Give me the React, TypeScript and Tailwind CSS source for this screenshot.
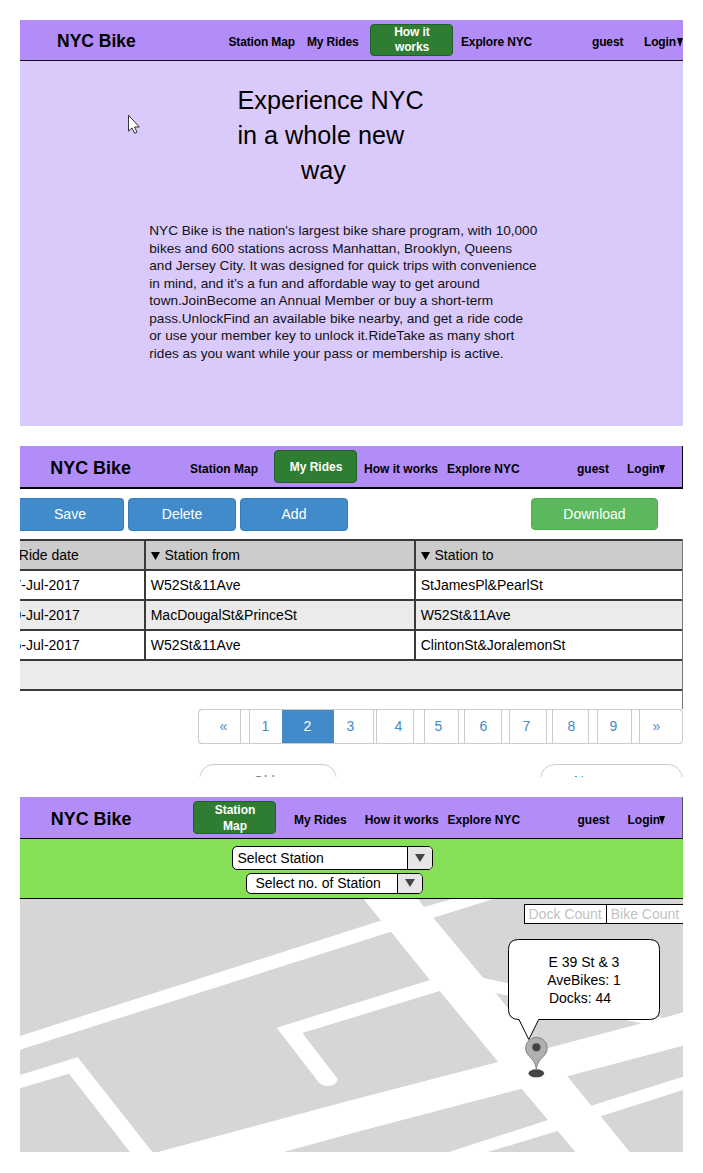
import React from "react";

type NavItem = { label: string; width: string; active?: boolean };

function Tri({ className, fill = "#000" }: { className: string; fill?: string }) {
  return (
    <svg className={`block shrink-0 ${className}`} viewBox="0 0 10 10" preserveAspectRatio="none">
      <path d="M0 0H10L5 10Z" fill={fill} />
    </svg>
  );
}

function Header({
  frame,
  title,
  items,
  nav,
  button,
  caret,
}: {
  frame: string;
  title: string;
  items: NavItem[];
  nav: string;
  button: string;
  caret: string;
}) {
  return (
    <header className={`flex shrink-0 items-start overflow-hidden bg-[#b28df7] font-bold whitespace-nowrap text-black ${frame}`}>
      <h1 className={`shrink-0 leading-[20px] ${title}`}>NYC Bike</h1>
      {items.map((item) =>
        item.active ? (
          <div key={item.label} className={`flex shrink-0 items-start pt-[4px] ${item.width}`}>
            <button
              className={`flex w-[83px] justify-center rounded-[4px] border border-[#1f5f28] bg-[#2f7d32] text-center text-[12px] whitespace-pre-line text-white ${button}`}
            >
              {item.label}
            </button>
          </div>
        ) : (
          <a key={item.label} className={`flex shrink-0 leading-[16px] ${nav} ${item.width}`}>
            {item.label}
            {item.label === "Login" && <Tri className={`h-[9px] w-[6px] ${caret}`} />}
          </a>
        ),
      )}
    </header>
  );
}

function HowItWorks() {
  return (
    <section className="flex h-[406px] flex-col overflow-hidden bg-[#dacafc]">
      <Header
        frame="h-[41px] border-b border-[#111]"
        title="mt-[11px] ml-[37px] w-[171.5px] text-[17.5px]"
        nav="pt-[14px] text-[12px] tracking-[-0.15px]"
        button="h-[32px] pl-[1px] leading-[15px] tracking-[-0.1px]"
        caret="mt-[4px] ml-[1px]"
        items={[
          { label: "Station Map", width: "w-[78.5px]" },
          { label: "My Rides", width: "w-[63px]" },
          { label: "How it\nworks", width: "w-[91px]", active: true },
          { label: "Explore NYC", width: "w-[131px]" },
          { label: "guest", width: "w-[52px]" },
          { label: "Login", width: "w-[40px]" },
        ]}
      />
      <div className="flex flex-1">
        <svg className="mt-[53px] ml-[107px] h-[21px] w-[14px] shrink-0" viewBox="0 0 14 21">
          <path d="M1.5 1.2V17.2L5 14L7.6 19.3L10 18.2L7.6 13H12.3Z" fill="#fff" stroke="#333" strokeWidth="1" />
        </svg>
        <div className="ml-[8.3px] flex flex-col">
          <h2 className="mt-[22px] ml-[88.2px] flex flex-col text-[25.2px] leading-[35px] whitespace-nowrap">
            <span>Experience NYC</span>
            <span>in a whole new</span>
            <span className="ml-[63.5px]">way</span>
          </h2>
          <p className="mt-[34px] flex flex-col text-[13.6px] leading-[17.5px] whitespace-nowrap text-[#111]">
            <span>NYC Bike is the nation's largest bike share program, with 10,000</span>
            <span>bikes and 600 stations across Manhattan, Brooklyn, Queens</span>
            <span>and Jersey City. It was designed for quick trips with convenience</span>
            <span>in mind, and it’s a fun and affordable way to get around</span>
            <span>town.JoinBecome an Annual Member or buy a short-term</span>
            <span>pass.UnlockFind an available bike nearby, and get a ride code</span>
            <span>or use your member key to unlock it.RideTake as many short</span>
            <span>rides as you want while your pass or membership is active.</span>
          </p>
        </div>
      </div>
    </section>
  );
}

const rides = [
  ["17-Jul-2017", "W52St&11Ave", "StJamesPl&PearlSt"],
  ["19-Jul-2017", "MacDougalSt&PrinceSt", "W52St&11Ave"],
  ["16-Jul-2017", "W52St&11Ave", "ClintonSt&JoralemonSt"],
];

const pages = [
  { label: "«", cell: "w-[43px] pl-[20.5px] rounded-l-[4px] border-x mr-[8px]" },
  { label: "1", cell: "w-[33px] pl-[11.5px] border-l" },
  { label: "2", cell: "w-[52px] pl-[21.5px] bg-[#428bca] border-[#428bca] text-white" },
  { label: "3", cell: "w-[40px] pl-[12.5px] border-r mr-[2px]" },
  { label: "4", cell: "w-[38px] pl-[17.5px] border-x mr-[10px]" },
  { label: "5", cell: "w-[35px] pl-[9.5px] border-x mr-[5px]" },
  { label: "6", cell: "w-[38px] pl-[14.5px] border-x mr-[7px]" },
  { label: "7", cell: "w-[38px] pl-[12.5px] border-x mr-[5px]" },
  { label: "8", cell: "w-[37px] pl-[14.5px] border-x mr-[8px]" },
  { label: "9", cell: "w-[35px] pl-[11.5px] border-x mr-[7px]" },
  { label: "»", cell: "w-[44px] pl-[12.5px] border-x rounded-r-[4px]" },
];

function MyRides() {
  return (
    <section className="mt-[20px] flex h-[331px] flex-col overflow-hidden bg-white">
      <Header
        frame="h-[43px] border-b-2 border-r border-black"
        title="mt-[12px] ml-[30.3px] w-[139.7px] text-[17.9px]"
        nav="pt-[15px] text-[12px]"
        button="h-[33px] pl-[1px] leading-[32px]"
        caret="mt-[4px] -ml-px"
        items={[
          { label: "Station Map", width: "w-[84px]" },
          { label: "My Rides", width: "w-[90px]", active: true },
          { label: "How it works", width: "w-[83px]" },
          { label: "Explore NYC", width: "w-[130px]" },
          { label: "guest", width: "w-[50px]" },
          { label: "Login", width: "w-[50px]" },
        ]}
      />
      <div className="flex h-[50px] shrink-0 items-start pt-[9px] text-center text-[14px] leading-[31px] text-white">
        <button className="h-[33px] w-[104px] rounded-r-[4px] border border-l-0 border-[#357ebd] bg-[#428bca] pr-[3px]">Save</button>
        <button className="ml-[4px] h-[33px] w-[108px] rounded-[4px] border border-[#357ebd] bg-[#428bca]">Delete</button>
        <button className="ml-[4px] h-[33px] w-[108px] rounded-[4px] border border-[#357ebd] bg-[#428bca]">Add</button>
        <button className="ml-[183px] h-[32px] w-[127px] rounded-[4px] border border-[#4cae4c] bg-[#5cb85c]">Download</button>
      </div>
      <div className="flex h-[170px] shrink-0 flex-col border-r border-[#777] text-[14px] leading-[16px] whitespace-nowrap">
        <div className="flex h-[32px] shrink-0 border-y-2 border-[#3a3a3a] bg-[#ccc]">
          <div className="flex w-[126px] justify-end overflow-hidden border-r-2 border-[#3a3a3a] pt-[6px] pr-[65.3px]">
            <span className="shrink-0">Ride date</span>
          </div>
          <div className="flex w-[270px] border-r-2 border-[#3a3a3a] pt-[6px] pl-[4.5px]">
            <Tri className="mt-[5px] mr-[5px] h-[8px] w-[9px]" />
            Station from
          </div>
          <div className="flex pt-[6px] pl-[4.5px]">
            <Tri className="mt-[5px] mr-[5px] h-[8px] w-[9px]" />
            Station to
          </div>
        </div>
        {rides.map(([date, from, to], i) => (
          <div key={date} className={`flex h-[30px] shrink-0 border-b-2 border-[#3a3a3a] ${i === 1 ? "bg-[#ebebeb]" : "bg-white"}`}>
            <div className="flex w-[126px] justify-end overflow-hidden border-r-2 border-[#3a3a3a] pt-[6px] pr-[64.3px]">
              <span className="shrink-0">{date}</span>
            </div>
            <div className="w-[270px] border-r-2 border-[#3a3a3a] pt-[6px] pl-[4.7px]">{from}</div>
            <div className="pt-[6px] pl-[4.7px]">{to}</div>
          </div>
        ))}
        <div className="h-[30px] shrink-0 border-b-2 border-[#3a3a3a] bg-[#ebebeb]" />
      </div>
      <nav className="ml-[178px] flex h-[35px] w-[485px] shrink-0 rounded-[4px] border-y border-[#ccc] text-[14px] text-[#428bca]">
        {pages.map((p) => (
          <a key={p.label} className={`-my-px shrink-0 border-y border-[#ccc] pt-[7px] leading-[18px] ${p.cell}`}>
            {p.label}
          </a>
        ))}
      </nav>
      <div className="mt-[20px] ml-[179px] flex shrink-0 justify-between text-[14px] leading-[16px]">
        <a className="h-[30px] w-[138px] rounded-[15px] border border-[#ccc] pt-[8px] pl-[27px] text-[#777]">
          ←<span className="ml-[12px]">Older</span>
        </a>
        <a className="h-[30px] w-[143px] rounded-[15px] border border-[#ccc] pt-[8px] pl-[32.7px] text-[#428bca]">Newer →</a>
      </div>
    </section>
  );
}

const blocks = [
  "20,899 363.5,899 381,920.5 20,1036",
  "418.3,899 452,899 424,907",
  "493.3,899 683,899 683,1012.3 663,1018 483,977.7 433.3,917.7",
  "495.7,993 641.7,1023.3 547,1048.3 541,1049",
  "20,1088.3 69,1073.7 130,1152 20,1152",
  "283.7,1152 350,1133.7 521.7,1088.7 548,1120 449,1152",
  "487.7,1152 557.7,1131 575.3,1152",
  "567.3,1076.3 683,1045.7 683,1076.7 591.3,1105.7",
  "600.7,1116.3 683,1090 683,1152 629.7,1152",
];

function StationMap() {
  return (
    <section className="mt-[20px] flex h-[355px] flex-col overflow-hidden">
      <Header
        frame="h-[42px] border-b border-r border-b-black border-r-[#555]"
        title="mt-[12px] ml-[30.8px] w-[142.2px] text-[17.9px]"
        nav="pt-[15px] text-[12px]"
        button="h-[33px] pl-[1px] leading-[16px]"
        caret="mt-[4px] -ml-px"
        items={[
          { label: "Station\nMap", width: "w-[101px]", active: true },
          { label: "My Rides", width: "w-[70.7px]" },
          { label: "How it works", width: "w-[82.8px]" },
          { label: "Explore NYC", width: "w-[130px]" },
          { label: "guest", width: "w-[50px]" },
          { label: "Login", width: "w-[50px]" },
        ]}
      />
      <div className="flex h-[60px] shrink-0 flex-col items-start border-b border-black bg-[#87df57] pt-[7px] text-[14px] leading-[16px] whitespace-nowrap">
        <button className="ml-[212px] flex h-[24px] w-[201px] overflow-hidden rounded-[5px] border border-black bg-white text-left">
          <span className="h-full w-[174px] shrink-0 pt-[3px] pl-[4.5px]">Select Station</span>
          <span className="flex h-full w-[25px] shrink-0 border-l border-black bg-[#e6e6e6]">
            <Tri className="mt-[7px] ml-[7px] h-[8px] w-[10px]" fill="#444" />
          </span>
        </button>
        <button className="mt-[3px] ml-[226px] flex h-[21px] w-[177px] overflow-hidden rounded-[5px] border border-black bg-white text-left">
          <span className="h-full w-[150px] shrink-0 pt-[1px] pl-[8.5px]">Select no. of Station</span>
          <span className="flex h-full w-[25px] shrink-0 border-l border-black bg-[#e6e6e6]">
            <Tri className="mt-[5px] ml-[7px] h-[8px] w-[10px]" fill="#444" />
          </span>
        </button>
      </div>
      <div className="relative h-[253px] shrink-0 overflow-hidden bg-white text-[14px] whitespace-nowrap">
        <svg className="block h-[253px] w-[663px]" viewBox="20 899 663 253">
          <g fill="#d6d6d6">
            {blocks.map((b) => (
              <polygon key={b} points={b} />
            ))}
            <path d="M20 1049.7L391 931.7L430 980L276.7 1027.7L318.3 1081.7Q322 1086 327.7 1086Q336 1085.5 337.6 1079.7L337 1078L302.3 1033L439.7 991L498.3 1062L350 1100.5L158 1152H152.3L77.7 1057.3L20 1075Z" />
          </g>
          <path
            d="M518.5 939.5H649.5Q659.5 939.5 659.5 949.5V1009.5Q659.5 1019.5 649.5 1019.5H538.7L528.8 1039.5L519 1019.5Q508.5 1019.5 508.5 1009.5V949.5Q508.5 939.5 518.5 939.5Z"
            fill="#fff"
            stroke="#000"
          />
          <ellipse cx="536.3" cy="1073.3" rx="7.8" ry="4" fill="#444" />
          <path
            d="M536.4 1069.5C535.5 1062 532 1059 528.5 1055.5A10.8 10.8 0 1 1 544.3 1055.5C540.5 1059 537.3 1062 536.4 1069.5Z"
            fill="#b0b0b0"
            stroke="#808080"
          />
          <circle cx="536.4" cy="1047.3" r="4.1" fill="#444" />
        </svg>
        <div className="absolute top-[5px] right-0 flex h-[20px] w-[159px] border-y border-l border-black bg-white leading-[18px] text-[#c2c2c2]">
          <span className="w-[82px] border-r border-black pl-[3.5px]">Dock Count</span>
          <span className="pl-[3.7px]">Bike Count</span>
        </div>
        <div className="absolute top-[54px] left-[488px] w-[152px] text-center leading-[18px]">
          <div>E 39 St &amp; 3</div>
          <div>AveBikes: 1</div>
          <div className="pr-[8px]">Docks: 44</div>
        </div>
      </div>
    </section>
  );
}

export default function App() {
  return (
    <main className="flex h-[1173px] w-[703px] flex-col overflow-hidden bg-white p-[20px] font-['Liberation_Sans',Arial,sans-serif] text-black">
      <HowItWorks />
      <MyRides />
      <StationMap />
    </main>
  );
}
